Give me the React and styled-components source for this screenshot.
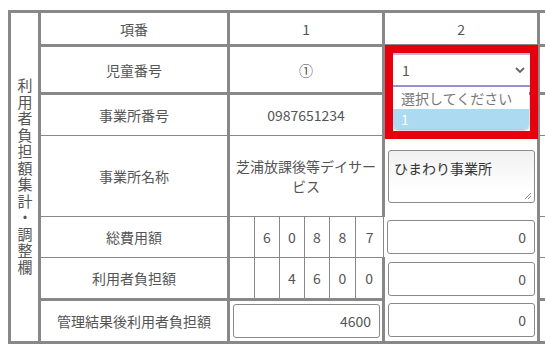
import React from 'react';
import styled, { createGlobalStyle } from 'styled-components';

const GlobalStyle = createGlobalStyle`
  html, body {
    margin: 0;
    padding: 0;
    overflow: hidden;
    background: #fff;
  }
  body {
    padding: 10px 0 0 8px;
    font-family: "Noto Sans CJK JP", "Noto Sans", sans-serif;
  }
`;

const LINES = {
  thick: '3px solid #888',
  thin: '1px solid #888',
};

const Sheet = styled.table`
  border-collapse: collapse;
  table-layout: fixed;
  width: 629px;
  border: 3px solid #888;
  color: #555;
  font-size: 14px;
  line-height: 20px;
`;

const Col = styled.col`
  width: ${p => p.$w}px;
`;

const Row = styled.tr`
  height: ${p => p.$h}px;
  & > td {
    border-bottom: ${p => LINES[p.$line]};
  }
`;

const Cell = styled.td`
  border-right: 3px solid #888;
  text-align: center;
  vertical-align: middle;
  padding: 0 5px;
  && {
    ${p => p.$open && 'border-bottom: none;'}
  }
`;

const InputCell = styled(Cell)`
  padding: 0 2px 0 3px;
`;

const SideTitle = styled.td`
  border-right: 3px solid #888;
  vertical-align: middle;
  text-align: center;
  padding: 0;
`;

const Vertical = styled.span`
  display: inline-block;
  writing-mode: vertical-rl;
  text-orientation: upright;
  font-size: 15px;
  letter-spacing: 1.5px;
  line-height: 16px;
  margin-top: 4px;
`;

const Digit = styled.td`
  border-right: 1px solid #888;
  text-align: center;
  vertical-align: middle;
  padding: 0;
  &:last-child, &.edge {
    border-right: 3px solid #888;
  }
`;

const Field = styled.div`
  box-sizing: border-box;
  width: 100%;
  height: 34px;
  border: 1px solid #8a8a8a;
  border-radius: 3px;
  background: #fff;
  display: flex;
  align-items: center;
  justify-content: flex-end;
  padding-right: 8px;
`;

const NoteArea = styled.div`
  box-sizing: border-box;
  width: 100%;
  height: 53px;
  border: 1px solid #8a8a8a;
  border-radius: 3px;
  background: linear-gradient(#f1f1f1, #fff 80%);
  text-align: left;
  padding: 7px 5px;
  color: #333;
  position: relative;
`;

const Grip = styled.svg`
  position: absolute;
  right: 2px;
  bottom: 2px;
`;

const SelectWrap = styled.div`
  position: relative;
  margin: 0 2px 0 1px;
`;

const SelectBox = styled.div`
  box-sizing: border-box;
  height: 34px;
  border: 1px solid #8a8a8a;
  border-top: 2px solid #c7b5ea;
  border-bottom: 2px solid #9f92d4;
  border-radius: 3px;
  background: #fff;
  display: flex;
  align-items: center;
  justify-content: space-between;
  padding: 0 6px 0 12px;
`;

const Dropdown = styled.div`
  position: absolute;
  top: 34px;
  left: 4px;
  right: 4px;
  background: #fff;
  border-radius: 0 0 5px 5px;
  box-shadow: 0 1px 3px rgba(0, 0, 0, 0.35);
  overflow: hidden;
  text-align: left;
  z-index: 2;
`;

const Option = styled.div`
  height: ${p => p.$h}px;
  line-height: ${p => p.$h}px;
  padding-left: 8px;
  color: ${p => (p.$active ? '#fff' : '#777')};
  background: ${p => (p.$active ? '#acdaf0' : '#fff')};
`;

const RedFrame = styled.div`
  position: absolute;
  box-sizing: border-box;
  left: -4px;
  top: -8px;
  width: 153px;
  height: 94px;
  border: 8px solid #e6000e;
  pointer-events: none;
  z-index: 3;
`;

const totals = ['', '6', '0', '8', '8', '7'];
const burden = ['', '', '4', '6', '0', '0'];

export default function App() {
  return (
    <>
      <GlobalStyle />
      <Sheet>
        <colgroup>
          <Col $w={30} />
          <Col $w={189} />
          <Col $w={26} />
          <Col $w={25} />
          <Col $w={25} />
          <Col $w={25} />
          <Col $w={26} />
          <Col $w={28} />
          <Col $w={155} />
          <Col $w={100} />
        </colgroup>
        <tbody>
          <Row $h={34} $line="thick">
            <SideTitle rowSpan={7}>
              <Vertical>利用者負担額集計・調整欄</Vertical>
            </SideTitle>
            <Cell>項番</Cell>
            <Cell colSpan={6}>1</Cell>
            <Cell>2</Cell>
            <Cell />
          </Row>
          <Row $h={48} $line="thick">
            <Cell>児童番号</Cell>
            <Cell colSpan={6}>①</Cell>
            <InputCell>
              <SelectWrap>
                <SelectBox>
                  <span>1</span>
                  <svg width="12" height="8" viewBox="0 0 12 8">
                    <path d="M2 2l4 4 4-4" fill="none" stroke="#666" strokeWidth="1.8" />
                  </svg>
                </SelectBox>
                <Dropdown>
                  <Option $h={22}>選択してください</Option>
                  <Option $h={20} $active>1</Option>
                </Dropdown>
                <RedFrame />
              </SelectWrap>
            </InputCell>
            <Cell />
          </Row>
          <Row $h={42} $line="thin">
            <Cell>事業所番号</Cell>
            <Cell colSpan={6}>0987651234</Cell>
            <Cell $open />
            <Cell />
          </Row>
          <Row $h={81} $line="thin">
            <Cell>事業所名称</Cell>
            <Cell colSpan={6}>芝浦放課後等デイサービス</Cell>
            <InputCell $open>
              <NoteArea>
                ひまわり事業所
                <Grip width="9" height="9" viewBox="0 0 9 9">
                  <path d="M8 2L2 8M8 5L5 8" stroke="#888" strokeWidth="1" />
                </Grip>
              </NoteArea>
            </InputCell>
            <Cell />
          </Row>
          <Row $h={41} $line="thin">
            <Cell>総費用額</Cell>
            {totals.map((d, i) => (
              <Digit key={i}>{d}</Digit>
            ))}
            <InputCell $open>
              <Field>0</Field>
            </InputCell>
            <Cell />
          </Row>
          <Row $h={42} $line="thick">
            <Cell>利用者負担額</Cell>
            {burden.map((d, i) => (
              <Digit key={i} className={i === 5 ? 'edge' : undefined}>{d}</Digit>
            ))}
            <InputCell $open>
              <Field>0</Field>
            </InputCell>
            <Cell />
          </Row>
          <Row $h={43} $line="thick">
            <Cell>管理結果後利用者負担額</Cell>
            <InputCell colSpan={6}>
              <Field>4600</Field>
            </InputCell>
            <InputCell>
              <Field>0</Field>
            </InputCell>
            <Cell />
          </Row>
        </tbody>
      </Sheet>
    </>
  );
}
